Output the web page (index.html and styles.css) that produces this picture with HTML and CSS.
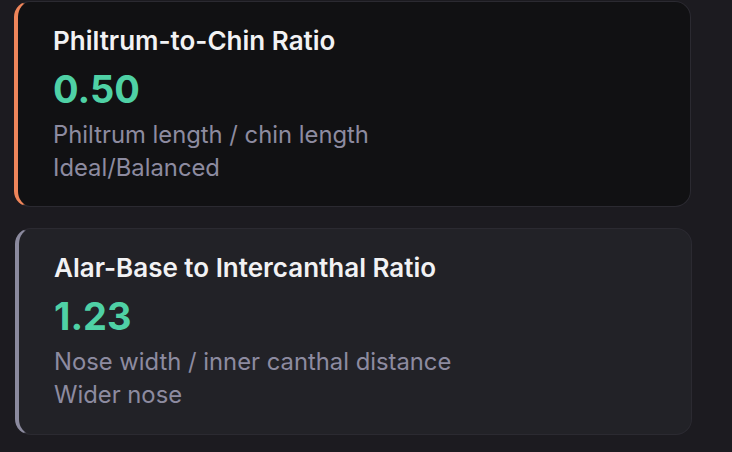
FILE: index.html
```html
<!DOCTYPE html>
<html>
<head>
<meta charset="utf-8">
<link rel="stylesheet" href="styles.css">
</head>
<body>
<div class="list">
  <div class="card card-active">
    <div class="title">Philtrum-to-Chin Ratio</div>
    <div class="value">0.50</div>
    <div class="desc desc-first">Philtrum length / chin length</div>
    <div class="desc">Ideal/Balanced</div>
  </div>
  <div class="card card-muted">
    <div class="title">Alar-Base to Intercanthal Ratio</div>
    <div class="value">1.23</div>
    <div class="desc desc-first">Nose width / inner canthal distance</div>
    <div class="desc">Wider nose</div>
  </div>
</div>
</body>
</html>
```
FILE: styles.css
```css
html, body {
  margin: 0;
  padding: 0;
  background: #1c1b20;
  font-family: Inter, "Noto Sans", sans-serif;
}
.list {
  display: flex;
  flex-direction: column;
  gap: 21px;
  padding: 1px 40px 0 15px;
}
.card {
  box-sizing: border-box;
  width: 677px;
  height: 206px;
  border: 1px solid #2b2a31;
  border-left: 4px solid #8b8a9e;
  border-radius: 16px;
  padding: 22px 0 0 35px;
  background: #222227;
}
.card-active {
  background: #111113;
  border-left-color: #ee855a;
  transform: translateX(-1px);
}
.card-muted {
  height: 207px;
}
.title {
  color: #f2f2f4;
  font-size: 26px;
  font-weight: 600;
  line-height: 34px;
}
.value {
  color: #4fd1a5;
  font-size: 38px;
  font-weight: 700;
  line-height: 50px;
  margin-top: 6px;
}
.desc {
  color: #8d8ba0;
  font-size: 23.8px;
  line-height: 33px;
}
.desc-first {
  margin-top: 4px;
}
```
